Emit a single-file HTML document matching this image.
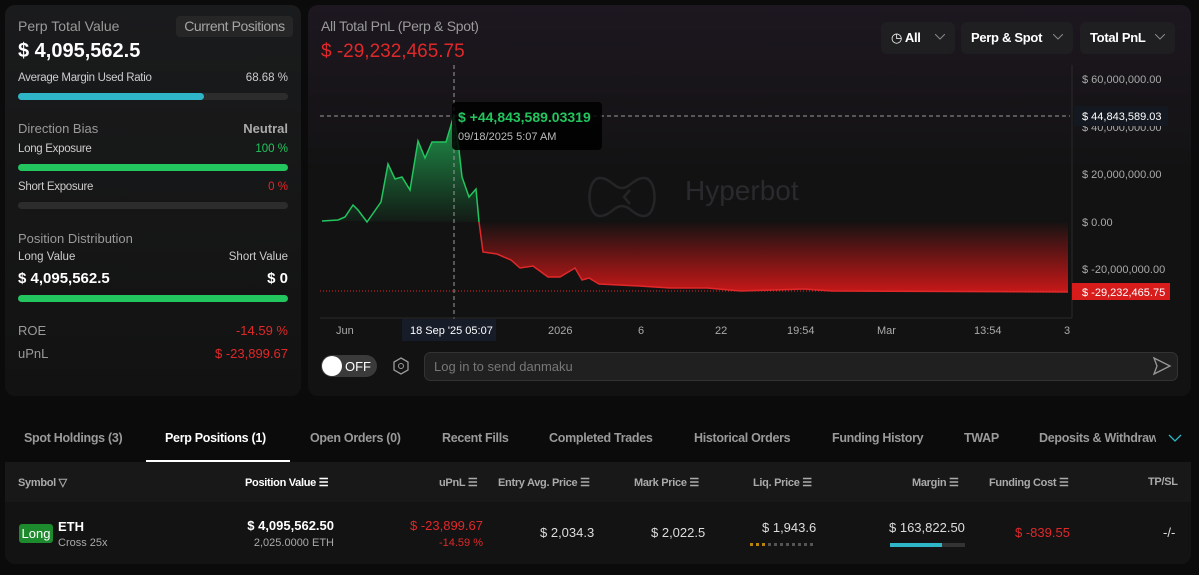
<!DOCTYPE html><html><head><meta charset="utf-8"><style>
*{box-sizing:border-box;margin:0;padding:0}
body{width:1199px;height:575px;background:#0b0b0b;font-family:"Liberation Sans",sans-serif;color:#fff;position:relative;overflow:hidden;font-size:12px}
.a{position:absolute}
.card{position:absolute;background:#151515;border-radius:10px}
.g{color:#9a9a9a}
.bar{position:absolute;height:7px;border-radius:4px;background:#2c2c2c}
.red{color:#e0282a}.grn{color:#22c55e}
.dd{position:absolute;top:17px;height:32px;background:#1f1f22;border-radius:6px;font-weight:bold;font-size:13px;line-height:32px;padding-left:10px;letter-spacing:-.3px}
.dd svg{position:absolute;right:10px;top:12px}
.tab{position:absolute;top:431px;font-size:12.5px;color:#9a9a9a;font-weight:bold;letter-spacing:-.3px}
.th{position:absolute;top:476px;font-size:11px;color:#aaa;font-weight:bold;letter-spacing:-.3px}
</style></head><body>
<div class="card" style="left:5px;top:5px;width:296px;height:391px;background:linear-gradient(#1a1b1c,#121212)">
<div class="a g" style="left:13px;top:13px;font-size:14px">Perp Total Value</div>
<div class="a" style="left:171px;top:11px;width:117px;height:21px;background:#262626;border-radius:4px;color:#a5a5a5;font-size:14px;text-align:center;line-height:21px;letter-spacing:-.4px">Current Positions</div>
<div class="a" style="left:13px;top:35px;font-size:20px;font-weight:bold">$ 4,095,562.5</div>
<div class="a" style="left:13px;top:67px;font-size:11.5px;color:#ccc;letter-spacing:-.3px">Average Margin Used Ratio</div>
<div class="a" style="right:13px;top:67px;font-size:11.5px;color:#ccc">68.68 %</div>
<div class="bar" style="left:13px;top:88px;width:270px"></div><div class="bar" style="left:13px;top:88px;width:186px;background:#2eb6c8"></div>
<div class="a g" style="left:13px;top:116px;font-size:13px">Direction Bias</div>
<div class="a" style="right:13px;top:116px;font-size:13px;color:#aaa;font-weight:bold">Neutral</div>
<div class="a" style="left:13px;top:138px;font-size:11.5px;color:#ccc;letter-spacing:-.3px">Long Exposure</div>
<div class="a grn" style="right:13px;top:138px;font-size:11.5px">100 %</div>
<div class="bar" style="left:13px;top:159px;width:270px;background:#22c55e"></div>
<div class="a" style="left:13px;top:176px;font-size:11.5px;color:#ccc;letter-spacing:-.3px">Short Exposure</div>
<div class="a red" style="right:13px;top:176px;font-size:11.5px">0 %</div>
<div class="bar" style="left:13px;top:197px;width:270px"></div>
<div class="a g" style="left:13px;top:226px;font-size:13px">Position Distribution</div>
<div class="a" style="left:13px;top:246px;font-size:11.5px;color:#ccc">Long Value</div>
<div class="a" style="right:13px;top:246px;font-size:11.5px;color:#ccc">Short Value</div>
<div class="a" style="left:13px;top:265px;font-size:15px;font-weight:bold">$ 4,095,562.5</div>
<div class="a" style="right:13px;top:265px;font-size:15px;font-weight:bold">$ 0</div>
<div class="bar" style="left:13px;top:290px;width:270px;background:#22c55e"></div>
<div class="a g" style="left:13px;top:318px;font-size:13px">ROE</div>
<div class="a red" style="right:13px;top:318px;font-size:13px">-14.59 %</div>
<div class="a g" style="left:13px;top:341px;font-size:13px">uPnL</div>
<div class="a red" style="right:13px;top:341px;font-size:13px">$ -23,899.67</div>
</div>
<div class="card" style="left:308px;top:5px;width:883px;height:391px;background:linear-gradient(#1d1720,#121212 45%)">
<div class="a g" style="left:13px;top:13px;font-size:14px;letter-spacing:-.3px">All Total PnL (Perp &amp; Spot)</div>
<div class="a red" style="left:13px;top:36px;font-size:19px">$ -29,232,465.75</div>
<div class="dd" style="left:573px;width:74px"><span style="font-weight:normal">◷</span> All<svg width="10" height="6"><path d="M0 0l5 5 5-5" fill="none" stroke="#888"/></svg></div>
<div class="dd" style="left:653px;width:112px">Perp &amp; Spot<svg width="10" height="6"><path d="M0 0l5 5 5-5" fill="none" stroke="#888"/></svg></div>
<div class="dd" style="left:772px;width:95px">Total PnL<svg width="10" height="6"><path d="M0 0l5 5 5-5" fill="none" stroke="#888"/></svg></div>
</div>
<svg class="a" style="left:0;top:0" width="1199" height="400">
<defs>
<linearGradient id="gg" x1="0" y1="0" x2="0" y2="1"><stop offset="0" stop-color="#22c55e" stop-opacity=".75"/><stop offset="1" stop-color="#22c55e" stop-opacity=".05"/></linearGradient>
<linearGradient id="rg" x1="0" y1="0" x2="0" y2="1"><stop offset="0" stop-color="#d01818" stop-opacity=".02"/><stop offset="1" stop-color="#d01818" stop-opacity=".95"/></linearGradient>
</defs>
<g fill="none" stroke="#2a2a2e" stroke-width="2.5" opacity=".8"><path d="M600 178c-14 0-14 38 0 38c10 0 14-10 22-10s12 10 22 10c14 0 14-38 0-38c-10 0-14 10-22 10s-12-10-22-10z"/><path d="M630 190l-6 7 6 7"/></g>
<text x="685" y="200" fill="#2a2a2e" font-size="28" font-family="Liberation Sans">Hyperbot</text>
<path d="M322 221L338 220 345 217 353 205 358 210 367 222 381 202 388 164 395 179 402 177 410 190 418 141 425 158 432 142 446 142 454 115 459 150 462 177 469 197 476 189 479 222Z" fill="url(#gg)"/>
<path d="M479 222L483 252 497 254 511 260 520 268 533 266 548 277 560 277 575 268 582 280 589 278 599 284 639 286 670 288 707 288 741 291 804 289 832 291 1068 292 1068 222Z" fill="url(#rg)"/>
<path d="M322 221L338 220 345 217 353 205 358 210 367 222 381 202 388 164 395 179 402 177 410 190 418 141 425 158 432 142 446 142 454 115 459 150 462 177 469 197 476 189 479 222" fill="none" stroke="#22c55e" stroke-width="1.5"/>
<path d="M479 222L483 252 497 254 511 260 520 268 533 266 548 277 560 277 575 268 582 280 589 278 599 284 639 286 670 288 707 288 741 291 804 289 832 291 1068 292" fill="none" stroke="#e0282a" stroke-width="1.5"/>
<line x1="320" y1="291" x2="1070" y2="291" stroke="#e0282a" stroke-dasharray="1 2"/>
<line x1="320" y1="116" x2="1070" y2="116" stroke="#999" stroke-dasharray="4 3"/>
<line x1="454" y1="65" x2="454" y2="330" stroke="#999" stroke-dasharray="4 3"/>
<line x1="1072" y1="65" x2="1072" y2="318" stroke="#2a2a2a"/>
<line x1="320" y1="318" x2="1072" y2="318" stroke="#2a2a2a"/>
<rect x="452" y="102" width="150" height="48" rx="4" fill="#000" opacity=".85"/>
<text x="458" y="122" fill="#22c55e" font-size="14" font-weight="bold" font-family="Liberation Sans">$ +44,843,589.03319</text>
<text x="458" y="140" fill="#bbb" font-size="11" font-family="Liberation Sans">09/18/2025 5:07 AM</text>
<g fill="#aaa" font-size="11" font-family="Liberation Sans">
<text x="1082" y="83">$ 60,000,000.00</text><text x="1082" y="131">$ 40,000,000.00</text><text x="1082" y="178">$ 20,000,000.00</text><text x="1082" y="226">$ 0.00</text><text x="1082" y="273">$ -20,000,000.00</text>
<text x="336" y="334">Jun</text><text x="548" y="334">2026</text><text x="638" y="334">6</text><text x="715" y="334">22</text><text x="787" y="334">19:54</text><text x="877" y="334">Mar</text><text x="974" y="334">13:54</text><text x="1064" y="334">3</text></g>
<rect x="1074" y="106" width="94" height="20" fill="#141820"/>
<text x="1082" y="120" fill="#fff" font-size="11" font-family="Liberation Sans">$ 44,843,589.03</text>
<rect x="1072" y="283" width="98" height="17" fill="#d81c1c"/>
<text x="1082" y="296" fill="#fff" font-size="11" font-family="Liberation Sans">$ -29,232,465.75</text>
<rect x="402" y="319" width="94" height="22" fill="#161c28"/>
<text x="410" y="334" fill="#fff" font-size="11" font-family="Liberation Sans">18 Sep '25   05:07</text>
<rect x="321" y="355" width="56" height="22" rx="11" fill="#3a3a3a"/><circle cx="332" cy="366" r="10" fill="#fff"/>
<text x="345" y="371" fill="#fff" font-size="13" font-family="Liberation Sans">OFF</text>
<path d="M401 358l7 4v8l-7 4-7-4v-8z" fill="none" stroke="#999" stroke-width="1.3"/><circle cx="401" cy="366" r="2.5" fill="none" stroke="#999"/>
<rect x="424.5" y="352.5" width="753" height="28" rx="6" fill="#202020" stroke="#333"/>
<text x="434" y="371" fill="#777" font-size="13" font-family="Liberation Sans">Log in to send danmaku</text>
<path d="M1154 358l16 8-16 8 3-8z" fill="none" stroke="#999" stroke-width="1.3"/>
</svg>
<div class="tab" style="left:24px">Spot Holdings (3)</div>
<div class="tab" style="left:165px;color:#fff">Perp Positions (1)</div>
<div class="a" style="left:146px;top:460px;width:144px;height:2px;background:#fff"></div>
<div class="tab" style="left:310px">Open Orders (0)</div>
<div class="tab" style="left:442px">Recent Fills</div>
<div class="tab" style="left:549px">Completed Trades</div>
<div class="tab" style="left:694px">Historical Orders</div>
<div class="tab" style="left:832px">Funding History</div>
<div class="tab" style="left:964px">TWAP</div>
<div class="tab" style="left:1039px;width:117px;overflow:hidden;white-space:nowrap">Deposits &amp; Withdrawals</div>
<svg class="a" style="left:1168px;top:434px" width="14" height="8"><path d="M1 1l6 6 6-6" fill="none" stroke="#2eb6c8" stroke-width="1.3"/></svg>
<div class="a" style="left:5px;top:462px;width:1186px;height:40px;background:#181818"></div>
<div class="a" style="left:5px;top:502px;width:1186px;height:62px;background:#131313;border-radius:0 0 10px 10px"></div>
<div class="th" style="left:18px">Symbol ▽</div>
<div class="th" style="left:245px;color:#fff">Position Value ☰</div>
<div class="th" style="left:439px">uPnL ☰</div>
<div class="th" style="left:498px">Entry Avg. Price ☰</div>
<div class="th" style="left:634px">Mark Price ☰</div>
<div class="th" style="left:753px">Liq. Price ☰</div>
<div class="th" style="left:912px">Margin ☰</div>
<div class="th" style="left:989px">Funding Cost ☰</div>
<div class="th" style="left:1148px">TP/SL</div>
<div class="a" style="left:19px;top:524px;width:34px;height:19px;background:#1e8a2e;border-radius:3px;font-size:13px;text-align:center;line-height:19px">Long</div>
<div class="a" style="left:58px;top:519px;font-size:13px;font-weight:bold">ETH</div>
<div class="a" style="left:58px;top:537px;font-size:11px;color:#aaa">Cross 25x</div>
<div class="a" style="right:865px;top:518px;font-size:13px;font-weight:bold">$ 4,095,562.50</div>
<div class="a" style="right:865px;top:537px;font-size:11px;color:#aaa">2,025.0000 ETH</div>
<div class="a red" style="right:716px;top:518px;font-size:13px">$ -23,899.67</div>
<div class="a red" style="right:716px;top:537px;font-size:11px">-14.59 %</div>
<div class="a" style="left:540px;top:525px;font-size:13px;color:#ddd">$ 2,034.3</div>
<div class="a" style="left:651px;top:525px;font-size:13px;color:#ddd">$ 2,022.5</div>
<div class="a" style="left:762px;top:520px;font-size:13px;color:#ddd">$ 1,943.6</div>
<div class="a" style="left:750px;top:543px;width:66px;height:3px;background:repeating-linear-gradient(90deg,#555 0 3px,transparent 3px 6px)"></div>
<div class="a" style="left:750px;top:543px;width:15px;height:3px;background:repeating-linear-gradient(90deg,#b8860b 0 3px,transparent 3px 6px)"></div>
<div class="a" style="left:889px;top:520px;font-size:13px;color:#ddd">$ 163,822.50</div>
<div class="a" style="left:890px;top:543px;width:75px;height:4px;background:#333"></div>
<div class="a" style="left:890px;top:543px;width:52px;height:4px;background:#2eb6c8"></div>
<div class="a red" style="left:1015px;top:525px;font-size:13px">$ -839.55</div>
<div class="a" style="left:1163px;top:525px;font-size:13px;color:#ddd">-/-</div>
</body></html>
